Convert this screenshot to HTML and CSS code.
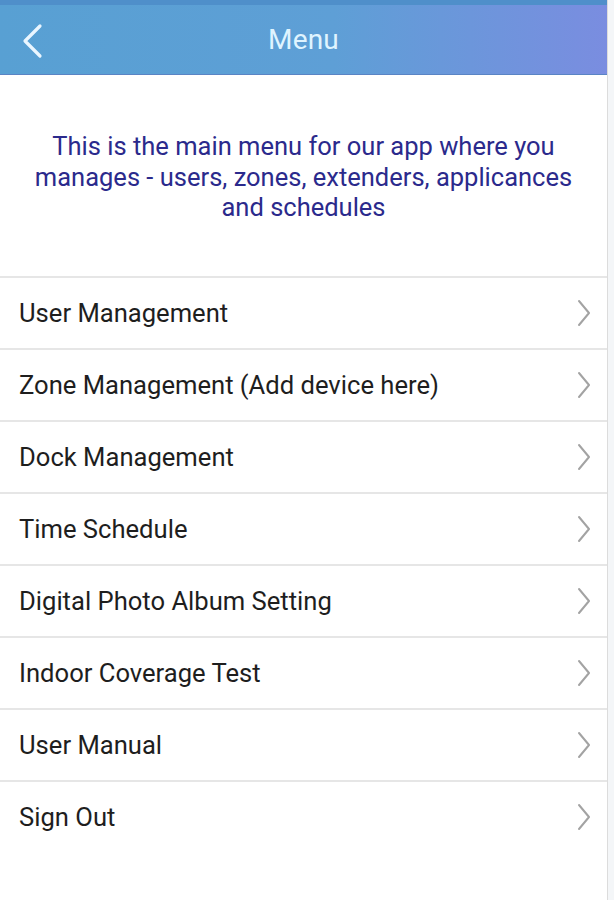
FILE: index.html
```html
<!DOCTYPE html>
<html lang="en">
<head>
  <meta charset="UTF-8">
  <title>Menu</title>
  <link rel="stylesheet" href="styles.css">
</head>
<body>
  <div class="app">
    <header class="topbar">
      <svg class="back" viewBox="0 0 24 36" fill="none">
        <path d="M20 3 L5 18 L20 33" stroke="#eaf6ff" stroke-width="3.2" stroke-linecap="round" stroke-linejoin="round"/>
      </svg>
      <h1>Menu</h1>
    </header>

    <p class="intro">This is the main menu for our app where you manages - users, zones, extenders, applicances and schedules</p>

    <ul class="menu">
      <li>User Management <svg class="chev" viewBox="0 0 14 28"><path d="M2 2 L12 14 L2 26"/></svg></li>
      <li>Zone Management (Add device here) <svg class="chev" viewBox="0 0 14 28"><path d="M2 2 L12 14 L2 26"/></svg></li>
      <li>Dock Management <svg class="chev" viewBox="0 0 14 28"><path d="M2 2 L12 14 L2 26"/></svg></li>
      <li>Time Schedule <svg class="chev" viewBox="0 0 14 28"><path d="M2 2 L12 14 L2 26"/></svg></li>
      <li>Digital Photo Album Setting <svg class="chev" viewBox="0 0 14 28"><path d="M2 2 L12 14 L2 26"/></svg></li>
      <li>Indoor Coverage Test <svg class="chev" viewBox="0 0 14 28"><path d="M2 2 L12 14 L2 26"/></svg></li>
      <li>User Manual <svg class="chev" viewBox="0 0 14 28"><path d="M2 2 L12 14 L2 26"/></svg></li>
      <li>Sign Out <svg class="chev" viewBox="0 0 14 28"><path d="M2 2 L12 14 L2 26"/></svg></li>
    </ul>
  </div>
</body>
</html>
```

FILE: styles.css
```css
body {
  margin: 0;
  font-family: Roboto, 'Noto Sans', Arial, sans-serif;
  background: #f4f6f8;
}

.app {
  width: 608px;
  min-height: 900px;
  background: #fff;
  border-right: 1px solid #dcdcdc;
  box-sizing: border-box;
}

.topbar {
  position: relative;
  height: 75px;
  display: flex;
  align-items: center;
  justify-content: center;
  background: linear-gradient(90deg, #58a0d3 0%, #5e9fd6 55%, #7a8de0 100%);
  border-top: 5px solid #4f8fca;
  border-bottom: 1px solid #5a84c4;
  box-sizing: border-box;
}

.topbar h1 {
  margin: 0;
  font-size: 28px;
  font-weight: 400;
  color: #dff4ff;
  letter-spacing: 0.2px;
}

.back {
  position: absolute;
  left: 20px;
  top: 18px;
  width: 24px;
  height: 36px;
}

.intro {
  margin: 0;
  padding: 56px 26px 53px;
  text-align: center;
  font-size: 25.5px;
  line-height: 30.5px;
  color: #2b2a8c;
}

.menu {
  list-style: none;
  margin: 0;
  padding: 0;
}

.menu li {
  height: 70px;
  display: flex;
  align-items: center;
  justify-content: space-between;
  padding: 0 16px 0 19px;
  border-top: 2px solid #e6e6e6;
  font-size: 25.6px;
  color: #1e1e1e;
}

.chev {
  width: 14px;
  height: 28px;
  fill: none;
  stroke: #a3a3a3;
  stroke-width: 2;
  stroke-linecap: round;
  stroke-linejoin: round;
}
```
